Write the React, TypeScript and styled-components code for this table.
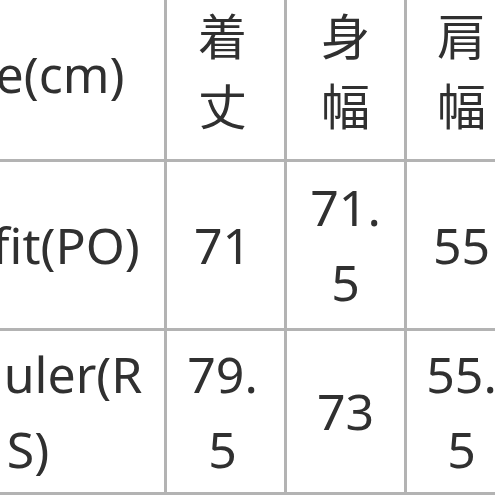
import React from "react";
import styled, { createGlobalStyle } from "styled-components";

const Global = createGlobalStyle`
  html, body {
    margin: 0;
    padding: 0;
    background: #ffffff;
    overflow: hidden;
  }
  body {
    width: 495px;
    height: 495px;
  }
`;

const Viewport = styled.div`
  width: 495px;
  height: 495px;
  overflow: hidden;
  background: #ffffff;
`;

const Table = styled.div`
  display: grid;
  grid-template-columns: 272px 117px 117px 113px;
  grid-template-rows: 169px 166px 161px 20px;
  gap: 3px;
  background: #b3b3b3;
  margin-left: -108px;
  margin-top: -10px;
  width: max-content;
  font-family: "Noto Sans", "Open Sans", "Noto Sans CJK JP", sans-serif;
  font-size: 50px;
  line-height: 75px;
  color: #303030;
`;

const Cell = styled.div<{ $padL: number; $padR: number }>`
  background: #ffffff;
  display: flex;
  align-items: center;
  justify-content: center;
  text-align: center;
  padding: 0 ${(p) => p.$padR}px 0 ${(p) => p.$padL}px;
  word-break: break-all;
  overflow-wrap: anywhere;
  min-width: 0;
`;

const Jp = styled.span`
  font-family: "Noto Sans CJK JP", "Noto Sans", sans-serif;
  line-height: 70px;
  font-size: 49px;
  padding-bottom: 12px;
`;

const rows: string[][] = [
  ["Size(cm)", "着丈", "身幅", "肩幅"],
  ["Bigfit(PO)", "71", "71.5", "55"],
  ["Reguler(RS)", "79.5", "73", "55.5"],
  ["", "", "", ""],
];

const pads: [number, number][] = [
  [20, 20],
  [9, 15],
  [12, 12],
  [10, 14],
];

export default function App() {
  return (
    <Viewport>
      <Global />
      <Table>
        {rows.map((r, i) =>
          r.map((c, j) => (
            <Cell key={`${i}-${j}`} $padL={pads[j][0]} $padR={pads[j][1]}>
              {i === 0 && j > 0 ? <Jp>{c}</Jp> : c}
            </Cell>
          ))
        )}
      </Table>
    </Viewport>
  );
}
